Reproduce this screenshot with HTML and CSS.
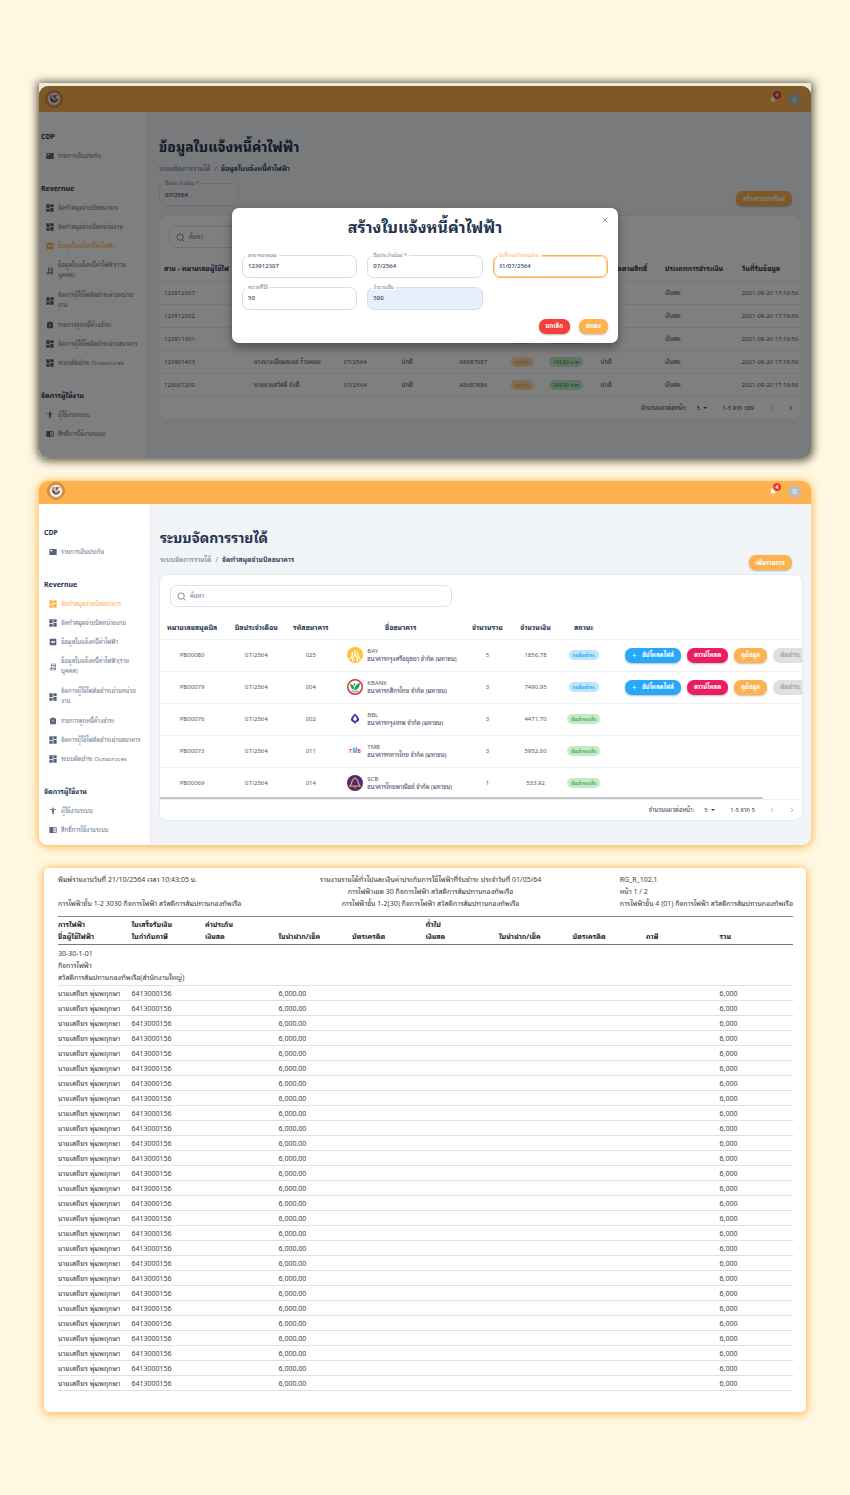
FILE: index.html
```html
<!DOCTYPE html>
<html lang="th">
<head>
<meta charset="utf-8">
<meta name="viewport" content="width=device-width, initial-scale=1">
<title>ระบบจัดการรายได้</title>
<link rel="stylesheet" href="styles.css">
</head>
<body>
<svg class="sprite" aria-hidden="true">
  <symbol id="i-card" viewBox="0 0 24 24"><path fill-rule="evenodd" d="M1 3h22v18H1zM4 6v4h6V6z"/></symbol>
  <symbol id="i-grid" viewBox="0 0 24 24"><path d="M1 13h10V1H1zM1 23h10v-8H1zM13 23h10V11H13zM13 1v8h10V1z"/></symbol>
  <symbol id="i-minus" viewBox="0 0 24 24"><path fill-rule="evenodd" d="M4 2h16a2 2 0 0 1 2 2v16a2 2 0 0 1-2 2H4a2 2 0 0 1-2-2V4a2 2 0 0 1 2-2zM6 10v4h12v-4z"/></symbol>
  <symbol id="i-receipt" viewBox="0 0 24 24"><path fill-rule="evenodd" d="M6 2h15v17a3 3 0 0 1-3 3H5a3 3 0 0 1-3-3v-3h4zM8 4v12h9v3a1 1 0 0 0 2 0V4zM4 18v1a1 1 0 0 0 1 1h10v-2z"/><path d="M10 7h8v2h-8zM10 11h8v2h-8z"/></symbol>
  <symbol id="i-clip" viewBox="0 0 24 24"><path fill-rule="evenodd" d="M5 4h4a3 3 0 0 1 6 0h4a2 2 0 0 1 2 2v14a2 2 0 0 1-2 2H5a2 2 0 0 1-2-2V6a2 2 0 0 1 2-2zM11 8v7h2V8zM11 17v2h2v-2z"/></symbol>
  <symbol id="i-person" viewBox="0 0 24 24"><circle cx="12" cy="4" r="2.4"/><path d="M21 9h-6v13h-2v-6h-2v6H9V9H3V7h18z"/></symbol>
  <symbol id="i-book" viewBox="0 0 24 24"><path fill-rule="evenodd" d="M3 3h18a2 2 0 0 1 2 2v14a2 2 0 0 1-2 2H3a2 2 0 0 1-2-2V5a2 2 0 0 1 2-2zM13 5v14h8V5z"/><path d="M14 8h6v2h-6zM14 11h6v2h-6zM14 14h6v2h-6z"/></symbol>
  <symbol id="i-search" viewBox="0 0 24 24"><g fill="none" stroke="currentColor" stroke-width="2"><circle cx="11" cy="11" r="8.5"/><path d="M17 17l5.5 5.5"/></g></symbol>
  <symbol id="i-bell" viewBox="0 0 24 24"><path d="M12 22a2 2 0 0 0 2-2h-4a2 2 0 0 0 2 2zM18 16v-5c0-3-1.600-5.600-4.500-6.300V4a1.500 1.500 0 0 0-3 0v.7C7.600 5.400 6 7.900 6 11v5l-2 2v1h16v-1z"/></symbol>
  <symbol id="i-prev" viewBox="0 0 24 24"><path fill="none" stroke="currentColor" stroke-width="3" d="M16 4l-8 8 8 8"/></symbol>
  <symbol id="i-next" viewBox="0 0 24 24"><path fill="none" stroke="currentColor" stroke-width="3" d="M8 4l8 8-8 8"/></symbol>
  <symbol id="i-down" viewBox="0 0 24 24"><path d="M4 8h16l-8 8z"/></symbol>
  <symbol id="i-plus" viewBox="0 0 24 24"><path d="M10.500 2h3v8.500H22v3h-8.500V22h-3v-8.500H2v-3h8.500z"/></symbol>
  <symbol id="i-close" viewBox="0 0 24 24"><path fill="none" stroke="currentColor" stroke-width="3" d="M3 3l18 18M21 3L3 21"/></symbol>
  <symbol id="i-logo" viewBox="0 0 36 36">
    <circle cx="18" cy="18" r="17" fill="#d9933f" stroke="#b8803f" stroke-width="1.500"/>
    <circle cx="18" cy="18" r="13" fill="#f3efec" stroke="#b88a5c"/>
    <path d="M10 13c0 8 3 12 8 12s8-4 8-8l-4 2c-1 3-5 3-6 0z" fill="#45474f"/>
    <path d="M17 10l9 1-5 3 1 3-5-1z" fill="#9a4a46"/>
    <path d="M15 14l3 4 5-2-2 6h-5z" fill="#e8a06c"/>
    <circle cx="13" cy="12" r="2" fill="#b9565a"/>
  </symbol>
</svg>

<main class="page">

  <section class="shot shot-dim">
    <div class="app app-bills">
      <header class="topbar">
        <svg class="logo"><use href="#i-logo"/></svg>
        <div class="top-right">
          <button class="bell" aria-label="การแจ้งเตือน"><svg><use href="#i-bell"/></svg><span class="badge">4</span></button>
          <span class="avatar">B</span>
        </div>
      </header>
      <div class="body">
        <nav class="side">
          <h3>CDP</h3>
          <ul><li><a href="#"><svg><use href="#i-card"/></svg>รายการเงินประกัน</a></li></ul>
          <h3>Revernue</h3>
          <ul>
            <li><a href="#"><svg><use href="#i-grid"/></svg>จัดทำสมุดจ่ายบิลธนาคาร</a></li>
            <li><a href="#"><svg><use href="#i-grid"/></svg>จัดทำสมุดจ่ายบิลหน่วยงาน</a></li>
            <li><a href="#" class="active"><svg><use href="#i-minus"/></svg>ข้อมูลใบแจ้งหนี้ค่าไฟฟ้า</a></li>
            <li><a href="#"><svg><use href="#i-receipt"/></svg><span>ข้อมูลใบแจ้งหนี้ค่าไฟฟ้า(ราย<br>บุคคล)</span></a></li>
            <li><a href="#"><svg><use href="#i-grid"/></svg><span>จัดการผู้ใช้ไฟตัดชำระผ่านหน่วย<br>งาน</span></a></li>
            <li><a href="#"><svg><use href="#i-clip"/></svg>รายการลูกหนี้ค้างชำระ</a></li>
            <li><a href="#"><svg><use href="#i-grid"/></svg>จัดการผู้ใช้ไฟตัดชำระผ่านธนาคาร</a></li>
            <li><a href="#"><svg><use href="#i-grid"/></svg>ระบบตัดชำระ Outsoruces</a></li>
          </ul>
          <h3>จัดการผู้ใช้งาน</h3>
          <ul>
            <li><a href="#"><svg><use href="#i-person"/></svg>ผู้ใช้งานระบบ</a></li>
            <li><a href="#"><svg><use href="#i-book"/></svg>สิทธิ์การใช้งานระบบ</a></li>
          </ul>
        </nav>
        <div class="content">
          <h1>ข้อมูลใบแจ้งหนี้ค่าไฟฟ้า</h1>
          <p class="crumbs"><a href="#">ระบบจัดการรายได้</a><span>/</span><b>ข้อมูลใบแจ้งหนี้ค่าไฟฟ้า</b></p>
          <div class="tools">
            <div class="field"><label for="month">บิลประจำเดือน *</label><input id="month" value="07/2564"></div>
            <button class="btn">สร้างรายการใหม่</button>
          </div>
          <div class="card">
            <label class="search"><svg><use href="#i-search"/></svg><input type="search" placeholder="ค้นหา" aria-label="ค้นหา"></label>
            <table class="grid bills">
              <colgroup><col class="w14"><col class="w14"><col class="w9"><col class="w9"><col class="w8"><col class="w6"><col class="w8"><col class="w10"><col class="w12"><col class="w10"></colgroup>
              <thead><tr><th>สาย - หมายเลขผู้ใช้ไฟ</th><th>ชื่อผู้ใช้ไฟ</th><th>เดือน</th><th>สถานะ</th><th>เลขที่</th><th>ชำระ</th><th>จำนวน</th><th>ส่วนลดตามสิทธิ์</th><th>ประเภทการชำระเงิน</th><th>วันที่รับข้อมูล</th></tr></thead>
              <tbody>
                <tr><td>123912307</td><td></td><td>07/2564</td><td>ปกติ</td><td></td><td><span class="pill orange">รอชำระ</span></td><td></td><td></td><td>เงินสด</td><td>2021-09-20 17:19:56</td></tr>
                <tr><td>123912302</td><td></td><td>07/2564</td><td>ปกติ</td><td></td><td><span class="pill orange">รอชำระ</span></td><td></td><td></td><td>เงินสด</td><td>2021-09-20 17:19:56</td></tr>
                <tr><td>123911301</td><td></td><td>07/2564</td><td>ปกติ</td><td></td><td><span class="pill orange">รอชำระ</span></td><td><span class="pill green">142.83 บาท</span></td><td></td><td>เงินสด</td><td>2021-09-20 17:19:56</td></tr>
                <tr><td>123901403</td><td>นางนางเอียมละออ ร้านพอย</td><td>07/2564</td><td>ปกติ</td><td>A8687687</td><td><span class="pill orange">รอชำระ</span></td><td><span class="pill green">142.83 บาท</span></td><td>ปกติ</td><td>เงินสด</td><td>2021-09-20 17:19:56</td></tr>
                <tr><td>123007200</td><td>นายนายสวัสดิ์ ถังตี</td><td>07/2564</td><td>ปกติ</td><td>A8687686</td><td><span class="pill orange">รอชำระ</span></td><td><span class="pill green">298.09 บาท</span></td><td>ปกติ</td><td>เงินสด</td><td>2021-09-20 17:19:56</td></tr>
              </tbody>
            </table>
            <div class="pager">
              <label for="rows-a">จำนวนแถวต่อหน้า:</label>
              <span class="sel"><select id="rows-a"><option>5</option></select><svg><use href="#i-down"/></svg></span>
              <span>1-5 จาก 389</span>
              <button disabled aria-label="ก่อนหน้า"><svg><use href="#i-prev"/></svg></button>
              <button aria-label="ถัดไป"><svg><use href="#i-next"/></svg></button>
            </div>
          </div>
        </div>
      </div>
      <div class="overlay">
        <form class="dialog" role="dialog" aria-labelledby="dlg">
          <button type="button" class="close" aria-label="ปิด"><svg><use href="#i-close"/></svg></button>
          <h2 id="dlg">สร้างใบแจ้งหนี้ค่าไฟฟ้า</h2>
          <div class="fields">
            <div class="field"><label for="f1">สาย-หมายเลข</label><input id="f1" value="123912307"></div>
            <div class="field"><label for="f2">บิลประจำเดือน *</label><input id="f2" value="07/2564"></div>
            <div class="field focus"><label for="f3">วันที่ครบกำหนดชำระ</label><input id="f3" value="31/07/2564"></div>
            <div class="field"><label for="f4">หน่วยที่ใช้</label><input id="f4" value="50"></div>
            <div class="field filled"><label for="f5">จำนวนเงิน</label><input id="f5" value="500"></div>
          </div>
          <div class="actions"><button type="button" class="btn red">ยกเลิก</button><button type="button" class="btn">ตกลง</button></div>
        </form>
      </div>
    </div>
  </section>

  <section class="shot shot-glow">
    <div class="app app-books">
      <header class="topbar">
        <svg class="logo"><use href="#i-logo"/></svg>
        <div class="top-right">
          <button class="bell" aria-label="การแจ้งเตือน"><svg><use href="#i-bell"/></svg><span class="badge">4</span></button>
          <span class="avatar">B</span>
        </div>
      </header>
      <div class="body">
        <nav class="side">
          <h3>CDP</h3>
          <ul><li><a href="#"><svg><use href="#i-card"/></svg>รายการเงินประกัน</a></li></ul>
          <h3>Revernue</h3>
          <ul>
            <li><a href="#" class="active"><svg><use href="#i-grid"/></svg>จัดทำสมุดจ่ายบิลธนาคาร</a></li>
            <li><a href="#"><svg><use href="#i-grid"/></svg>จัดทำสมุดจ่ายบิลหน่วยงาน</a></li>
            <li><a href="#"><svg><use href="#i-minus"/></svg>ข้อมูลใบแจ้งหนี้ค่าไฟฟ้า</a></li>
            <li><a href="#"><svg><use href="#i-receipt"/></svg><span>ข้อมูลใบแจ้งหนี้ค่าไฟฟ้า(ราย<br>บุคคล)</span></a></li>
            <li><a href="#"><svg><use href="#i-grid"/></svg><span>จัดการผู้ใช้ไฟตัดชำระผ่านหน่วย<br>งาน</span></a></li>
            <li><a href="#"><svg><use href="#i-clip"/></svg>รายการลูกหนี้ค้างชำระ</a></li>
            <li><a href="#"><svg><use href="#i-grid"/></svg>จัดการผู้ใช้ไฟตัดชำระผ่านธนาคาร</a></li>
            <li><a href="#"><svg><use href="#i-grid"/></svg>ระบบตัดชำระ Outsoruces</a></li>
          </ul>
          <h3>จัดการผู้ใช้งาน</h3>
          <ul>
            <li><a href="#"><svg><use href="#i-person"/></svg>ผู้ใช้งานระบบ</a></li>
            <li><a href="#"><svg><use href="#i-book"/></svg>สิทธิ์การใช้งานระบบ</a></li>
          </ul>
        </nav>
        <div class="content">
          <h1>ระบบจัดการรายได้</h1>
          <div class="tools">
            <p class="crumbs"><a href="#">ระบบจัดการรายได้</a><span>/</span><b>จัดทำสมุดจ่ายบิลธนาคาร</b></p>
            <button class="btn">เพิ่มรายการ</button>
          </div>
          <div class="card">
            <label class="search"><svg><use href="#i-search"/></svg><input type="search" placeholder="ค้นหา" aria-label="ค้นหา"></label>
            <div class="scroller">
            <table class="grid books">
              <colgroup><col class="w10"><col class="w10"><col class="w7"><col class="w21"><col class="w6"><col class="w9"><col class="w6"><col></colgroup>
              <thead><tr><th>หมายเลขสมุดบิล</th><th>บิลประจำเดือน</th><th>รหัสธนาคาร</th><th>ชื่อธนาคาร</th><th>จำนวนราย</th><th>จำนวนเงิน</th><th>สถานะ</th><th></th></tr></thead>
              <tbody>
                <tr><td>PB00080</td><td>07/2564</td><td>025</td>
                  <td><div class="bank"><svg viewBox="0 0 32 32"><circle cx="16" cy="16" r="16" fill="#fdc23e"/><path d="M16 6v9M11 10l-1 8-5 7M21 10l1 8 5 7M16 15l-4 6-1 8M16 15l4 6 1 8" fill="none" stroke="#fff" stroke-width="2.500"/></svg><span>BAY<b>ธนาคารกรุงศรีอยุธยา จำกัด (มหาชน)</b></span></div></td>
                  <td>5</td><td>1856.78</td><td><span class="pill blue">รอตัดชำระ</span></td>
                  <td><div class="acts"><button class="btn sky"><svg><use href="#i-plus"/></svg>อัปโหลดไฟล์</button><button class="btn pink">ดาวน์โหลด</button><button class="btn">ดูข้อมูล</button><button class="btn gray" disabled>ตัดชำระ</button></div></td></tr>
                <tr><td>PB00079</td><td>07/2564</td><td>004</td>
                  <td><div class="bank"><svg viewBox="0 0 32 32"><circle cx="16" cy="16" r="14.500" fill="#fff" stroke="#e0303e" stroke-width="3"/><path d="M15 22C15 14 12 11 6 10c1 7 4 11 9 12zM16 22c-1-8 4-13 10-14-1 9-4 13-10 14z" fill="#1aa053"/><path d="M7 23h18l-4 4H11z" fill="#a9aeb0"/><circle cx="15" cy="11" r="2" fill="#1aa053"/></svg><span>KBANK<b>ธนาคารกสิกรไทย จำกัด (มหาชน)</b></span></div></td>
                  <td>3</td><td>7490.95</td><td><span class="pill blue">รอตัดชำระ</span></td>
                  <td><div class="acts"><button class="btn sky"><svg><use href="#i-plus"/></svg>อัปโหลดไฟล์</button><button class="btn pink">ดาวน์โหลด</button><button class="btn">ดูข้อมูล</button><button class="btn gray" disabled>ตัดชำระ</button></div></td></tr>
                <tr><td>PB00076</td><td>07/2564</td><td>002</td>
                  <td><div class="bank"><svg viewBox="0 0 32 32"><circle cx="16" cy="16" r="15.500" fill="#fff" stroke="#f1f1f4"/><path d="M16 5c4 4 7 7 8 11 1 3-2 6-5 6l-3 4-3-4c-3 0-6-3-5-6 1-4 4-7 8-11z" fill="#33389a"/><path d="M16 9l4 7-4 5-4-5z" fill="#fff"/></svg><span>BBL<b>ธนาคารกรุงเทพ จำกัด (มหาชน)</b></span></div></td>
                  <td>3</td><td>4471.70</td><td><span class="pill green">ตัดชำระแล้ว</span></td><td></td></tr>
                <tr><td>PB00073</td><td>07/2564</td><td>011</td>
                  <td><div class="bank"><svg viewBox="0 0 32 32"><circle cx="16" cy="16" r="15.500" fill="#fff" stroke="#f1f1f4"/><text x="4" y="20" class="tmb tmb-r">T</text><text x="11" y="20" class="tmb tmb-b">M</text><text x="21" y="20" class="tmb tmb-r">B</text><path d="M12 12l2-4 2 4zM17 12l2-4 2 4z" fill="#2b8fd0"/></svg><span>TMB<b>ธนาคารทหารไทย จำกัด (มหาชน)</b></span></div></td>
                  <td>3</td><td>5952.60</td><td><span class="pill green">ตัดชำระแล้ว</span></td><td></td></tr>
                <tr><td>PB00069</td><td>07/2564</td><td>014</td>
                  <td><div class="bank"><svg viewBox="0 0 32 32"><circle cx="16" cy="16" r="16" fill="#4b2a7b"/><path d="M16 6c5 3 7 7 7 11l3 5H6l3-5c0-4 2-8 7-11z" fill="none" stroke="#e9a53a" stroke-width="2.500"/><path d="M16 22v5" stroke="#e9a53a" stroke-width="2"/></svg><span>SCB<b>ธนาคารไทยพาณิชย์ จำกัด (มหาชน)</b></span></div></td>
                  <td>1</td><td>533.92</td><td><span class="pill green">ตัดชำระแล้ว</span></td><td></td></tr>
              </tbody>
            </table>
            <span class="thumb"></span>
            </div>
            <div class="pager">
              <label for="rows-b">จำนวนแถวต่อหน้า:</label>
              <span class="sel"><select id="rows-b"><option>5</option></select><svg><use href="#i-down"/></svg></span>
              <span>1-5 จาก 5</span>
              <button disabled aria-label="ก่อนหน้า"><svg><use href="#i-prev"/></svg></button>
              <button disabled aria-label="ถัดไป"><svg><use href="#i-next"/></svg></button>
            </div>
          </div>
        </div>
      </div>
    </div>
  </section>

  <section class="report">
    <header class="report-head">
      <p>พิมพ์รายงานวันที่ 21/10/2564 เวลา 10:43:05 น.<br><br>การไฟฟ้าชั้น 1-2 3030 กิจการไฟฟ้า สวัสดิการสัมปทานกองทัพเรือ</p>
      <p class="mid">รายงานรายได้ทั่วไปและเงินค่าประกันการใช้ไฟฟ้าที่รับชำระ ประจำวันที่ 01/05/64<br>การไฟฟ้าเขต 30 กิจการไฟฟ้า สวัสดิการสัมปทานกองทัพเรือ<br>การไฟฟ้าชั้น 1-2(30) กิจการไฟฟ้า สวัสดิการสัมปทานกองทัพเรือ</p>
      <p>RG_R_102.1<br>หน้า 1 / 2<br>การไฟฟ้าชั้น 4 (01) กิจการไฟฟ้า สวัสดิการสัมปทานกองทัพเรือ</p>
    </header>
    <table class="ledger">
      <thead>
        <tr><th>การไฟฟ้า<br>ชื่อผู้ใช้ไฟฟ้า</th><th>ใบเสร็จรับเงิน<br>ใบกำกับภาษี</th><th>ค่าประกัน<br>เงินสด</th><th>ใบนำฝาก/เช็ค</th><th>บัตรเครดิต</th><th>ทั่วไป<br>เงินสด</th><th>ใบนำฝาก/เช็ค</th><th>บัตรเครดิต</th><th>ภาษี</th><th>รวม</th></tr>
      </thead>
      <tbody id="ledger-rows">
        <tr class="group"><td colspan="10">30-30-1-01<br>กิจการไฟฟ้า<br>สวัสดิการสัมปทานกองทัพเรือ(สำนักงานใหญ่)</td></tr>
      </tbody>
    </table>
  </section>
</main>
<script src="ledger.js"></script>
</body>
</html>
```
FILE: ledger.js
```js
const entries = Array.from({ length: 27 }, () => ({
  name: "นายเสถียร พุ่มพฤกษา",
  receipt: "6413000156",
  deposit: "6,000.00",
  total: "6,000"
}));

const body = document.getElementById("ledger-rows");
for (const e of entries) {
  const row = body.insertRow();
  for (const text of [e.name, e.receipt, "", e.deposit, "", "", "", "", "", e.total]) {
    row.insertCell().textContent = text;
  }
}
```
FILE: styles.css
```css
* { box-sizing: border-box; }
body {
  margin: 0;
  background: #fff7e0;
  color: #4d5b70;
  font-family: "Noto Sans", "Noto Sans Thai Looped", "Loma", "Noto Sans Thai", sans-serif;
  font-size: 6px;
  line-height: 10px;
}
h1, h2, h3, p, ul { margin: 0; padding: 0; }
ul { list-style: none; }
a { color: inherit; text-decoration: none; }
button, input, select { font: inherit; color: inherit; margin: 0; }
button { border: 0; padding: 0; background: none; }
svg { fill: currentColor; display: block; flex: none; }
.sprite { position: absolute; width: 0; height: 0; }

.page { display: flex; flex-direction: column; gap: 23px; padding: 83px 39px; }

/* framed app windows */
.shot-dim { background: linear-gradient(#efe9d6 20px, #7a7b7c 20px); padding-top: 3px; border-radius: 0 0 9px 9px; box-shadow: 0 1px 8px 2px rgba(40, 38, 25, .75); }
.shot-glow { border-radius: 9px; box-shadow: 0 1px 9px 1px #fdb552; }
.app { position: relative; overflow: hidden; border-radius: 9px; }
.topbar { display: flex; justify-content: space-between; align-items: center; height: 26px; padding: 0 10px 0 6px; background: #feb14f; }
.app-books .topbar { height: 23px; padding-left: 8px; padding-bottom: 3px; }
.logo { width: 18px; height: 18px; }
.top-right { display: flex; align-items: center; gap: 11px; }
.bell { position: relative; color: #fff; }
.bell svg { width: 8px; height: 8px; }
.badge { position: absolute; left: 4px; top: -4px; width: 8px; height: 8px; border-radius: 50%; background: #f03a3a; font-size: 5px; line-height: 8px; font-weight: 700; }
.avatar { width: 13px; height: 13px; border-radius: 50%; background: #bdbdbd; color: #eee; font-size: 7px; line-height: 13px; text-align: center; }
.body { display: grid; grid-template-columns: 109px 1fr; background: #f2f5f8; }
.app-books .body { grid-template-columns: 112px 1fr; }

/* navigation */
.side { background: #fff; border-right: 1px solid #e8ebef; padding: 20px 0 15px 2px; }
.app-books .side { padding: 24px 0 6px 5px; }
.side h3 { color: #22324f; font-size: 7px; line-height: 10px; font-weight: 700; margin-bottom: 4px; }
.side ul { margin-bottom: 19px; }
.side ul:last-child { margin-bottom: 0; }
.side a { display: flex; align-items: center; gap: 4px; padding: 5px 0 4px 5px; color: #6b7a90; white-space: nowrap; }
.side a span { padding-bottom: 1px; }
.side svg { width: 8px; height: 8px; color: #55647d; }
.side .active, .side .active svg { color: #feb14f; }

/* content */
.content { min-width: 0; padding: 23px 10px 0 11px; }
.app-books .content { padding: 22px 9px 0; }
h1 { color: #22324f; font-size: 14px; line-height: 24px; font-weight: 700; }
.crumbs { display: flex; gap: 4px; font-size: 7px; line-height: 10px; padding-top: 5px; color: #6b7a90; white-space: nowrap; }
.crumbs b { color: #22324f; font-weight: 600; }
.tools { display: flex; justify-content: space-between; align-items: flex-end; padding: 9px 9px 10px 0; }
.app-books .tools { align-items: flex-start; padding: 5px 10px 5px 0; }
.app-books .crumbs { padding: 0; }
.btn { display: flex; align-items: center; justify-content: center; height: 15px; padding: 0 7px; border-radius: 7px; background: #feb14f; color: #fff; font-size: 6px; font-weight: 700; white-space: nowrap; box-shadow: 0 1px 2px rgba(60, 60, 60, .35); }
.btn svg { width: 5px; height: 5px; margin-right: 5px; }
.red { background: #f43f3b; }
.sky { background: #27a9fb; }
.pink { background: #e91e63; }
.gray { background: #e0e0e0; color: #a6a6a6; box-shadow: none; }

.field { position: relative; }
.tools .field { width: 80px; }
.field input { display: block; width: 100%; height: 23px; border: 1px solid #d9dce2; border-radius: 7px; padding: 0 5px; background: none; color: #33435c; font-weight: 500; }
.field label { position: absolute; left: 4px; top: -3px; padding: 0 2px; background: #f2f5f8; color: #6b7a90; font-size: 5px; line-height: 6px; }

.card { background: #fff; border-radius: 8px; box-shadow: 0 0 1px 1px #e6e9ed; overflow: hidden; padding-top: 10px; }
.search { display: flex; align-items: center; gap: 4px; width: 44%; height: 22px; margin: 0 10px; padding: 0 6px; border: 1px solid #dfe2e7; border-radius: 7px; }
.search svg { width: 9px; height: 9px; color: #55647d; }
.search input { flex: 1; min-width: 0; border: 0; padding: 0; background: none; }
.search input::placeholder { color: #6b7a90; opacity: 1; }

.grid { width: 100%; table-layout: fixed; border-collapse: collapse; text-align: left; white-space: nowrap; }
.grid th { color: #22324f; font-size: 7px; font-weight: 700; padding: 0; border-bottom: 1px solid #edeff2; }
.grid td { padding: 0; border-bottom: 1px solid #edeff2; }
.bills th, .bills td { padding-left: 5px; }
.bills th { height: 33px; padding-top: 10px; }
.bills tbody tr { height: 23px; }
.books { text-align: center; }
.books th { height: 32px; padding-top: 10px; text-align: center; }
.books td { height: 32px; }
.w6 { width: 6%; } .w7 { width: 7%; } .w8 { width: 8%; } .w9 { width: 9%; } .w10 { width: 10%; }
.w12 { width: 12%; } .w14 { width: 14%; } .w21 { width: 21%; }

.pill { display: inline-block; height: 10px; line-height: 10px; padding: 0 4px; border-radius: 5px; font-size: 5px; font-weight: 600; vertical-align: middle; }
.orange { background: #ffdcae; color: #ff9a30; }
.green { background: #c5e8c9; color: #3fae53; }
.blue { background: #b9e5fd; color: #35a6e6; }

.bank { display: flex; align-items: center; gap: 4px; padding-left: 14px; text-align: left; line-height: 8px; }
.bank svg { width: 16px; height: 16px; }
.bank b { display: block; font-weight: 400; color: #33435c; }
.tmb { font-size: 10px; font-weight: 700; }
.tmb-r { fill: #e03a3e; }
.tmb-b { fill: #2b8fd0; }
.acts { display: flex; gap: 6px; padding-left: 22px; }
.acts .btn { flex: none; }
.scroller { position: relative; overflow: hidden; }
.thumb { position: absolute; left: 0; bottom: 1px; width: 94%; height: 2px; background: #c6c6c6; }

.pager { display: flex; align-items: center; justify-content: flex-end; gap: 14px; height: 20px; padding-right: 7px; color: #33435c; }
.app-bills .pager { height: 22px; }
.pager label { margin-right: -4px; }
.pager svg { width: 6px; height: 6px; }
.pager button:disabled { color: #a0a8b4; }
.sel { display: flex; align-items: center; gap: 2px; }
.sel select { appearance: none; border: 0; padding: 0; background: none; }

/* modal */
.overlay { position: absolute; inset: 0; display: flex; align-items: center; justify-content: center; padding-top: 6px; background: rgba(0, 0, 0, .5); }
.dialog { position: relative; width: 50%; padding: 7px 10px 9px; border-radius: 7px; background: #fff; box-shadow: 0 4px 10px rgba(0, 0, 0, .4); }
.dialog h2 { color: #22324f; font-size: 16px; line-height: 24px; text-align: center; font-weight: 700; }
.close { position: absolute; right: 10px; top: 9px; color: #6b7a90; }
.close svg { width: 6px; height: 6px; }
.fields { display: grid; grid-template-columns: repeat(3, 1fr); gap: 9px 10px; padding: 16px 0 9px; }
.dialog .field label { background: #fff; }
.focus input { border: 1px solid #feb14f; outline: 1px solid #fed49c; outline-offset: -2px; }
.dialog .focus label { color: #feb14f; }
.filled input { background: #e8f0fe; }
.actions { display: flex; justify-content: flex-end; gap: 9px; }

/* printed report */
.report { margin: 0 5px; padding: 6px 13px 21px 14px; border-radius: 5px; background: #fff; color: #3d3d3d; box-shadow: 0 1px 8px 1px #fdb552; font-size: 7px; line-height: 12px; }
.report-head { display: flex; justify-content: space-between; padding-bottom: 6px; white-space: nowrap; }
.mid { text-align: center; }
.ledger { width: 100%; table-layout: fixed; border-collapse: collapse; text-align: left; white-space: nowrap; }
.ledger th { height: 28px; padding: 2px 0 1px; color: #222; vertical-align: bottom; border-top: 1px solid #888; border-bottom: 1px solid #777; }
.ledger td { height: 15px; padding: 2px 0 1px; line-height: 11px; border-bottom: 1px solid #e0e0e0; }
.ledger .group td { height: 40px; padding: 3px 0 1px; line-height: 12px; }
```
